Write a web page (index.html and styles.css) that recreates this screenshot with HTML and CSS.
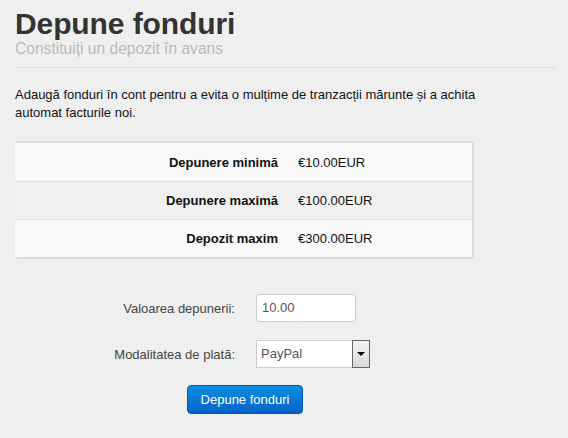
FILE: index.html
```html
<!DOCTYPE html>
<html>
<head>
<meta charset="utf-8">
<link rel="stylesheet" href="styles.css">
</head>
<body>
<div class="page">
  <div class="header">
    <h1 class="title">Depune fonduri</h1>
    <div class="subtitle">Constituiți un depozit în avans</div>
  </div>
  <p class="intro">Adaugă fonduri în cont pentru a evita o mulțime de tranzacții mărunte și a achita automat facturile noi.</p>
  <div class="limits">
    <div class="row"><div class="lbl">Depunere minimă</div><div class="val">€10.00EUR</div></div>
    <div class="row alt"><div class="lbl">Depunere maximă</div><div class="val">€100.00EUR</div></div>
    <div class="row"><div class="lbl">Depozit maxim</div><div class="val">€300.00EUR</div></div>
  </div>
  <form class="form">
    <div class="field">
      <label class="flabel">Valoarea depunerii:</label>
      <div class="input">10.00</div>
    </div>
    <div class="field">
      <label class="flabel">Modalitatea de plată:</label>
      <div class="select"><span class="stext">PayPal</span><span class="sbtn"><span class="tri"></span></span></div>
    </div>
    <div class="actions">
      <button type="button" class="btn">Depune fonduri</button>
    </div>
  </form>
</div>
</body>
</html>
```
FILE: styles.css
```css
html, body {
  margin: 0;
  padding: 0;
  background: #efefef;
  font-family: "Liberation Sans", Arial, sans-serif;
}
.page {
  padding: 0 15px;
  width: 540px;
}
.header {
  padding-top: 8px;
  border-bottom: 1px solid #dcdcdc;
  padding-bottom: 8px;
}
.title {
  margin: 0;
  font-size: 30px;
  line-height: 32px;
  font-weight: bold;
  color: #333;
  letter-spacing: -0.1px;
}
.subtitle {
  font-size: 15.6px;
  line-height: 20px;
  color: #bbb;
  margin-top: -1px;
}
.intro {
  margin: 18px 0 0;
  font-size: 13px;
  line-height: 18px;
  color: #111;
  width: 480px;
}
.limits {
  margin-top: 19px;
  width: 457px;
  border-top: 2px solid #dedede;
  box-shadow: 1px 1px 2px #ccc;
  background: #f9f9f9;
}
.row {
  display: grid;
  grid-template-columns: 273px 1fr;
  height: 38px;
  align-items: center;
  font-size: 13px;
  color: #111;
  border-top: 1px solid #dedede;
  box-sizing: border-box;
}
.row:first-child { border-top: 0; }
.row.alt { background: #f1f1f1; }
.lbl {
  text-align: right;
  font-weight: bold;
  padding-right: 10px;
}
.val {
  padding-left: 10px;
}
.form {
  margin-top: 37px;
  width: 460px;
}
.field {
  display: grid;
  grid-template-columns: 220px auto;
  column-gap: 21px;
  align-items: center;
  justify-items: start;
  margin-bottom: 18px;
}
.flabel {
  justify-self: end;
  font-size: 13px;
  color: #444;
}
.input {
  width: 88px;
  height: 26px;
  line-height: 26px;
  padding: 0 5px;
  background: #fff;
  border: 1px solid #ccc;
  border-radius: 3px;
  font-size: 13px;
  color: #555;
}
.select {
  display: flex;
  width: 113px;
  height: 26px;
  background: #fff;
  border: 1px solid #ccc;
  border-right: 0;
  font-size: 13px;
  color: #555;
}
.stext {
  flex: 1;
  line-height: 26px;
  padding-left: 4px;
}
.sbtn {
  width: 16px;
  height: 26px;
  border: 1px solid #666;
  margin-top: -1px;
  background: linear-gradient(#f4f4f4, #d8d8d8);
  display: flex;
  align-items: center;
  justify-content: center;
}
.tri {
  width: 0;
  height: 0;
  border-left: 4px solid transparent;
  border-right: 4px solid transparent;
  border-top: 4px solid #000;
}
.actions {
  width: 460px;
  display: flex;
  justify-content: center;
  margin-top: -1px;
}
.btn {
  width: 116px;
  height: 29px;
  border: 1px solid #0557ae;
  border-radius: 4px;
  background: linear-gradient(#0b8fe2, #0562c8);
  color: #fff;
  font-family: "Liberation Sans", Arial, sans-serif;
  font-size: 13px;
  padding: 0;
}
```
